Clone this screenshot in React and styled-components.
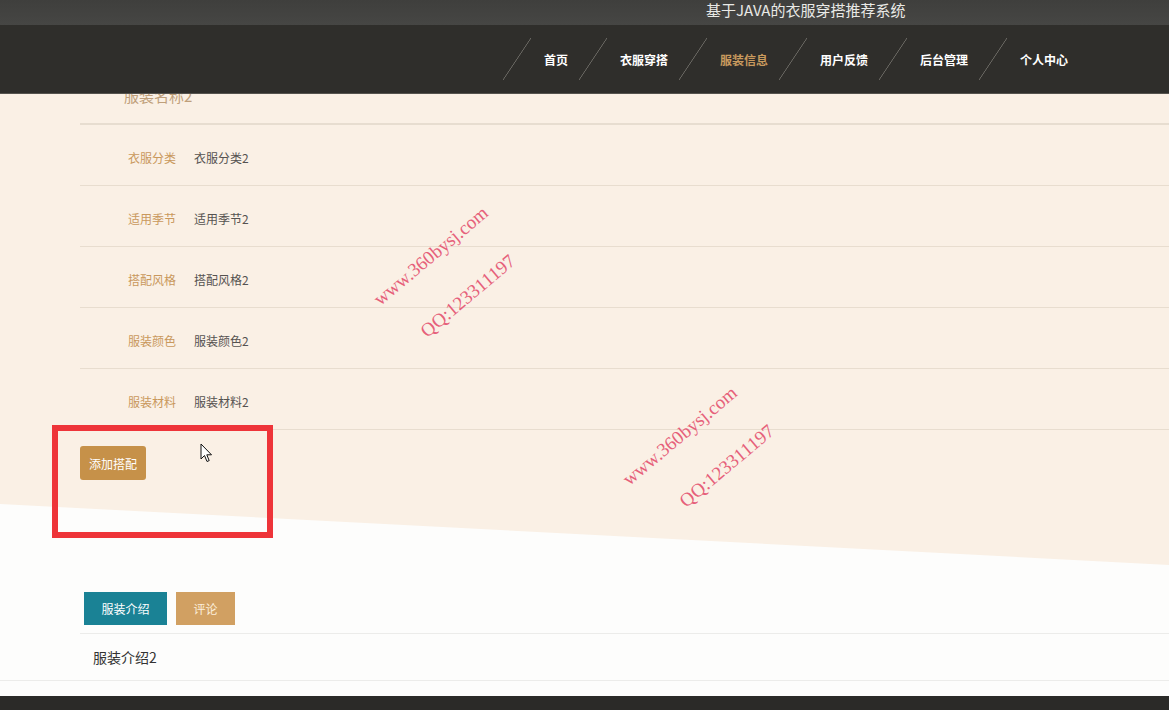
import React from "react";
import styled, { createGlobalStyle } from "styled-components";

const Global = createGlobalStyle`
  html, body { margin: 0; padding: 0; background: #fdfdfc; overflow: hidden; }
  body { font-family: "Noto Sans CJK SC", "Noto Sans", sans-serif; font-size: 12px; }
  * { box-sizing: border-box; }
`;

const Page = styled.div`
  position: relative;
  width: 1169px;
  height: 710px;
  overflow: hidden;
  background: #fdfdfc;
`;

const Header = styled.header`
  position: relative;
  z-index: 3;
`;

const TopBar = styled.div`
  height: 25px;
  background: linear-gradient(#3f3f3d, #464644);
  padding-left: 706px;
  padding-top: 1px;
`;

const SiteTitle = styled.div`
  color: #e9e9e6;
  font-size: 15px;
  line-height: 17px;
  white-space: nowrap;
`;

const NavBar = styled.nav`
  height: 69px;
  background: #2f2e2b;
  border-bottom: 1px solid #55534e;
  display: flex;
  justify-content: flex-end;
  align-items: center;
  padding-right: 90px;
`;

const NavItem = styled.a`
  display: flex;
  align-items: center;
  height: 42px;
  color: ${(p) => (p.$active ? "#c99a5e" : "#ffffff")};
  font-size: 12px;
  font-weight: 700;
  text-decoration: none;
  white-space: nowrap;
`;

const Slash = styled.span`
  width: 28px;
  height: 42px;
  margin-right: 13px;
  background: linear-gradient(
    to bottom right,
    transparent calc(50% - 0.7px),
    #75736d 50%,
    transparent calc(50% + 0.7px)
  );
`;

const NavLabel = styled.span`
  margin-right: 11px;
`;

const Detail = styled.section`
  position: relative;
  height: 481px;
  &::before {
    content: "";
    position: absolute;
    inset: 0;
    background: #faf0e5;
    clip-path: polygon(0 0, 100% 0, 100% 471px, 0 410px);
  }
`;

const DetailInner = styled.div`
  position: relative;
  display: flow-root;
  margin-left: 80px;
`;

const TitleRow = styled.div`
  margin-top: -10px;
  height: 41px;
  border-bottom: 2px solid #e7ddd0;
  padding-left: 44px;
  padding-top: 2px;
  color: #bf9f7a;
  font-size: 15px;
  line-height: 20px;
`;

const Row = styled.div`
  height: 61px;
  border-bottom: 1.5px solid #e8ddcf;
  display: flex;
  align-items: center;
  padding-top: 5px;
  padding-left: 48px;
`;

const Label = styled.span`
  width: 48px;
  margin-right: 18px;
  color: #c9985c;
  white-space: nowrap;
`;

const Value = styled.span`
  color: #555250;
`;

const ActionBar = styled.div`
  padding-top: 16px;
`;

const AddButton = styled.button`
  width: 66px;
  height: 34px;
  border: none;
  border-radius: 3px;
  background: #c69149;
  color: #fff;
  font-family: inherit;
  font-size: 12px;
  padding: 0;
`;

const TabsArea = styled.div`
  padding-top: 17px;
`;

const TabBar = styled.div`
  margin-left: 80px;
  padding-left: 4px;
  display: flex;
  gap: 9px;
  padding-bottom: 8px;
  border-bottom: 1px solid #ececea;
`;

const Tab = styled.div`
  height: 33px;
  width: ${(p) => p.$w}px;
  display: flex;
  align-items: center;
  justify-content: center;
  background: ${(p) => (p.$active ? "#1a8295" : "#d1a062")};
  color: ${(p) => (p.$active ? "#ffffff" : "#fcefdc")};
  font-size: 12px;
`;

const TabContent = styled.div`
  padding: 13px 0 12px 93px;
  font-size: 14px;
  line-height: 21px;
  color: #333;
  border-bottom: 1px solid #ececea;
`;

const Footer = styled.footer`
  margin-top: 15px;
  height: 40px;
  background: #2b2a28;
`;

const Watermark = styled.div`
  position: absolute;
  left: ${(p) => p.$x}px;
  top: ${(p) => p.$y}px;
  transform: translate(-50%, -50%) rotate(-40deg);
  color: #e6607a;
  font-family: "Liberation Serif", "Times New Roman", serif;
  font-size: 19px;
  white-space: nowrap;
  z-index: 4;
  pointer-events: none;
`;

const Highlight = styled.div`
  position: absolute;
  left: 52px;
  top: 425px;
  width: 221px;
  height: 113px;
  border: 6px solid #ee3439;
  z-index: 5;
`;

const Cursor = styled.svg`
  position: absolute;
  left: 200px;
  top: 443px;
  z-index: 6;
`;

const rows = [
  ["衣服分类", "衣服分类2"],
  ["适用季节", "适用季节2"],
  ["搭配风格", "搭配风格2"],
  ["服装颜色", "服装颜色2"],
  ["服装材料", "服装材料2"],
];

const navs = ["首页", "衣服穿搭", "服装信息", "用户反馈", "后台管理", "个人中心"];

export default function App() {
  return (
    <Page>
      <Global />
      <Header>
        <TopBar>
          <SiteTitle>基于JAVA的衣服穿搭推荐系统</SiteTitle>
        </TopBar>
        <NavBar>
          {navs.map((n) => (
            <NavItem key={n} $active={n === "服装信息"}>
              <Slash />
              <NavLabel>{n}</NavLabel>
            </NavItem>
          ))}
        </NavBar>
      </Header>
      <Detail>
        <DetailInner>
          <TitleRow>服装名称2</TitleRow>
          {rows.map(([l, v]) => (
            <Row key={l}>
              <Label>{l}</Label>
              <Value>{v}</Value>
            </Row>
          ))}
          <ActionBar>
            <AddButton>添加搭配</AddButton>
          </ActionBar>
        </DetailInner>
      </Detail>
      <TabsArea>
        <TabBar>
          <Tab $active $w={83}>服装介绍</Tab>
          <Tab $w={59}>评论</Tab>
        </TabBar>
        <TabContent>服装介绍2</TabContent>
      </TabsArea>
      <Footer />
      <Watermark $x={431} $y={256}>www.360bysj.com</Watermark>
      <Watermark $x={468} $y={296}>QQ:123311197</Watermark>
      <Watermark $x={680} $y={436}>www.360bysj.com</Watermark>
      <Watermark $x={727} $y={466}>QQ:123311197</Watermark>
      <Highlight />
      <Cursor width="13" height="20" viewBox="0 0 13 20">
        <path d="M1 1 L1 16 L4.5 12.5 L7 18.5 L9.2 17.6 L6.8 11.8 L11.5 11.8 Z" fill="#fff" stroke="#111" strokeWidth="1" strokeLinejoin="round" />
      </Cursor>
    </Page>
  );
}
